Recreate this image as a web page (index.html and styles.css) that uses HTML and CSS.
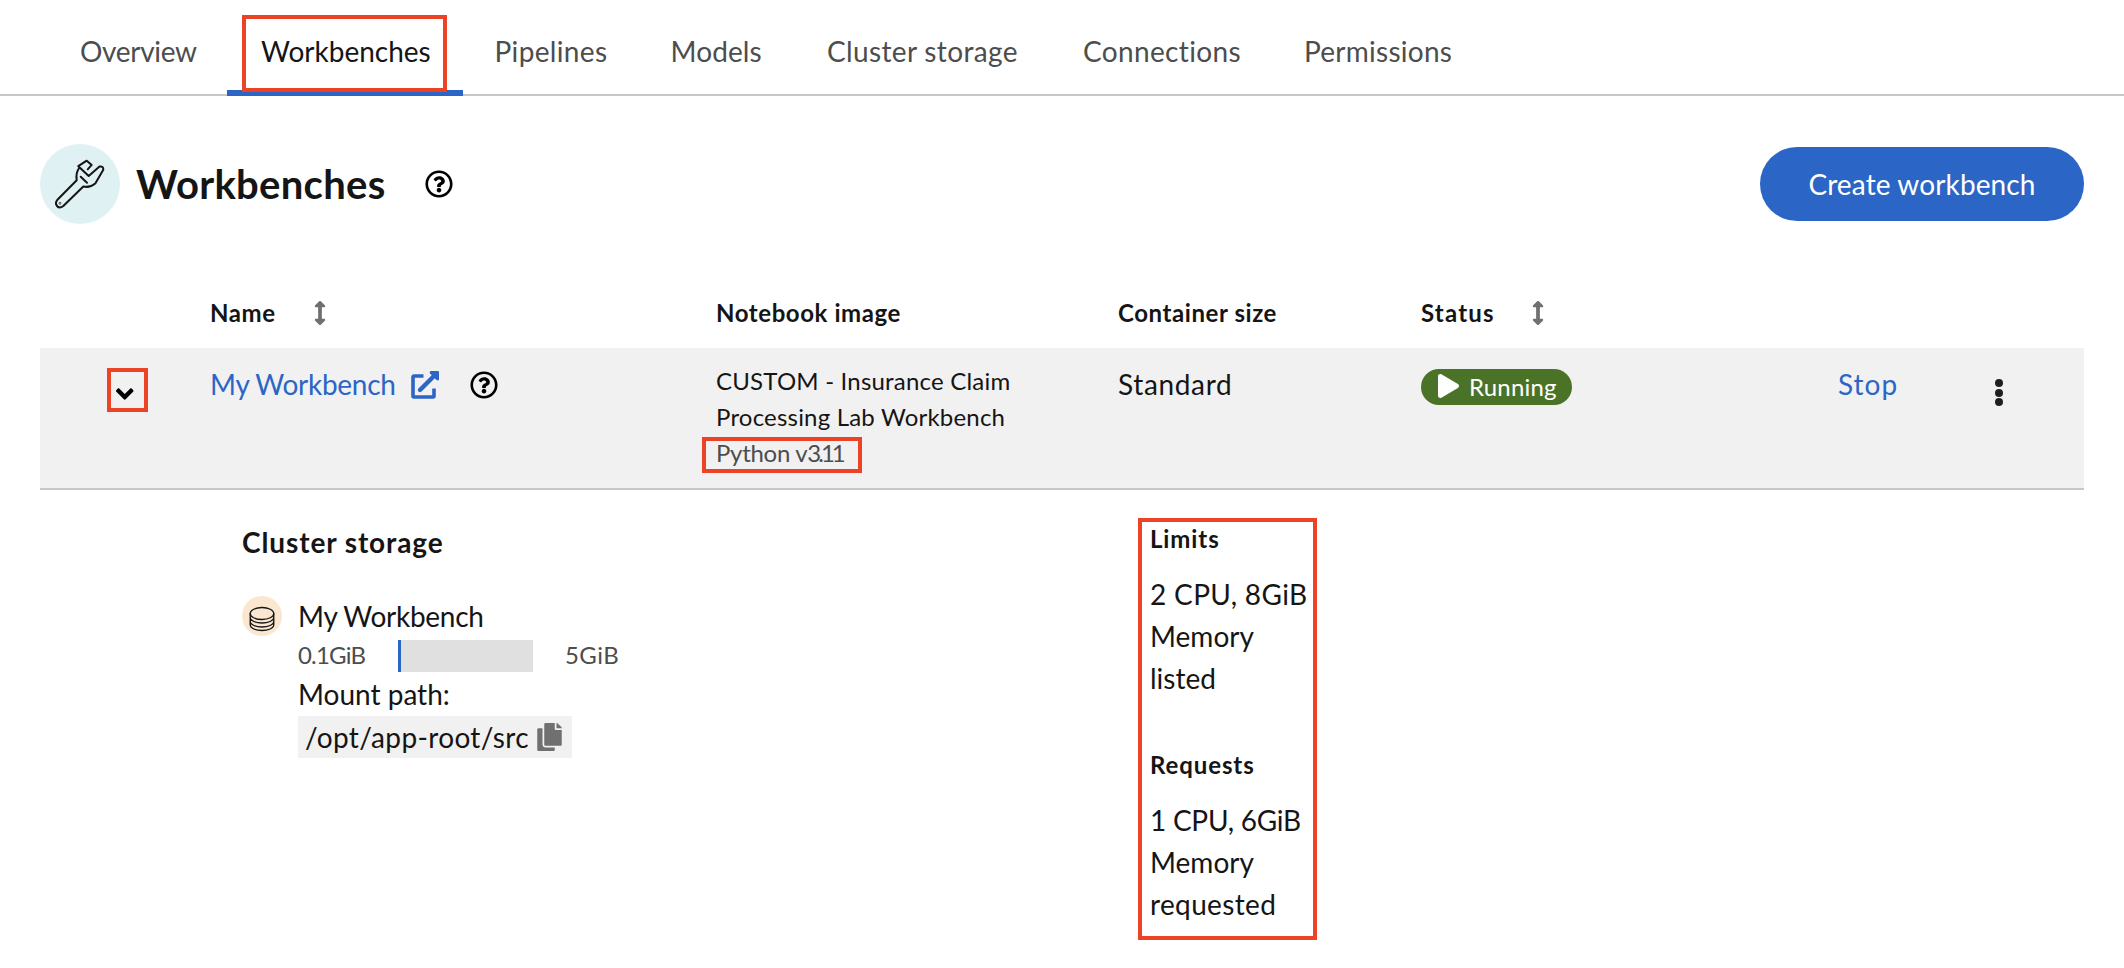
FILE: index.html
```html
<!DOCTYPE html>
<html lang="en">
<head>
<meta charset="utf-8">
<title>Workbenches</title>
<link rel="stylesheet" href="styles.css">
</head>
<body>
<svg class="sprite" aria-hidden="true">
  <symbol id="help" viewBox="0 0 512 512"><path d="M256 8C119.043 8 8 119.083 8 256c0 136.997 111.043 248 248 248s248-111.003 248-248C504 119.083 392.957 8 256 8zm0 448c-110.532 0-200-89.431-200-200 0-110.495 89.472-200 200-200 110.491 0 200 89.471 200 200 0 110.53-89.431 200-200 200zm107.244-255.2c0 67.052-72.421 68.084-72.421 92.863V300c0 6.627-5.373 12-12 12h-45.647c-6.627 0-12-5.373-12-12v-8.659c0-35.745 27.1-50.034 47.579-61.516 17.561-9.845 28.324-16.541 28.324-29.579 0-17.246-21.999-28.693-39.784-28.693-23.189 0-33.894 10.977-48.942 29.969-4.057 5.12-11.46 6.071-16.666 2.124l-27.824-21.098c-5.107-3.872-6.251-11.066-2.644-16.363C184.846 131.491 214.94 112 261.794 112c49.071 0 101.45 38.304 101.45 88.8zM298 368c0 23.159-18.841 42-42 42s-42-18.841-42-42 18.841-42 42-42 42 18.841 42 42z"/></symbol>
  <symbol id="sort" viewBox="0 0 256 512"><path d="M214.059 377.941H168V134.059h46.059c21.382 0 32.09-25.851 16.971-40.971L144.971 7.029c-9.373-9.373-24.568-9.373-33.941 0L24.971 93.088c-15.119 15.119-4.411 40.971 16.971 40.971H88v243.882H41.941c-21.382 0-32.09 25.851-16.971 40.971l86.059 86.059c9.373 9.373 24.568 9.373 33.941 0l86.059-86.059c15.12-15.119 4.412-40.971-16.97-40.971z"/></symbol>
</svg>
<nav class="tabs">
  <a class="tab tab-overview">Overview</a>
  <a class="tab tab-workbenches current">Workbenches<span class="mark mark-tab"></span></a>
  <a class="tab tab-pipelines">Pipelines</a>
  <a class="tab tab-models">Models</a>
  <a class="tab tab-storage">Cluster storage</a>
  <a class="tab tab-connections">Connections</a>
  <a class="tab tab-permissions">Permissions</a>
</nav>
<main class="page">
  <header class="head">
    <span class="badge">
      <svg width="60" height="60" viewBox="0 0 60 60" fill="none" stroke="#151515" stroke-width="2" stroke-linejoin="round" stroke-linecap="round"><path d="M37.700 15.300L41.700 10.900L36.700 6.700L28.300 12.200L38.700 22L49.500 12.500Q53.500 12 53.300 15.800L45.300 29.500Q40 34 33.300 32.500L13.300 52Q9.500 55 7 52Q4.800 49 7.200 46L26.700 26.200Q25.500 18.500 29.500 13.500M30.700 22.700L37 28.700"/><circle cx="10" cy="49.300" r="0.300"/></svg>
    </span>
    <h1 class="title">Workbenches</h1>
    <svg class="help head-help"><use href="#help"/></svg>
    <button class="create"><span>Create workbench</span></button>
  </header>
  <section class="table">
    <div class="grid thead">
      <span></span>
      <span class="th th-name"><span>Name</span><svg class="sort"><use href="#sort"/></svg></span>
      <span class="th th-image">Notebook image</span>
      <span class="th th-size">Container size</span>
      <span class="th th-status"><span>Status</span><svg class="sort"><use href="#sort"/></svg></span>
      <span></span>
      <span></span>
    </div>
    <div class="grid row">
      <button class="toggle"><svg width="17.500" height="28" viewBox="0 0 320 512"><path d="M143 352.300L7 216.300c-9.400-9.400-9.400-24.600 0-33.900l22.600-22.600c9.400-9.400 24.600-9.400 33.900 0l96.400 96.400 96.400-96.400c9.400-9.400 24.600-9.400 33.900 0l22.600 22.600c9.400 9.400 9.400 24.600 0 33.900l-136 136c-9.200 9.400-24.400 9.400-33.800 0z"/></svg></button>
      <div class="name">
        <a class="link name-link">My Workbench</a>
        <svg class="ext" width="28" height="28" viewBox="0 0 28 28"><path d="M12.500 5H3Q2 5 2 6V25Q2 26 3 26H22Q23 26 23 25V17.500" fill="none" stroke="currentColor" stroke-width="3.600"/><path d="M9 19L23 5" stroke="currentColor" stroke-width="4.400" stroke-linecap="round"/><path d="M19.500 0H27Q28 0 28 1V8.500Q27 10 25.500 9L19 2.500Q18 1 19.500 0Z" fill="currentColor"/></svg>
        <svg class="help"><use href="#help"/></svg>
      </div>
      <div class="image">
        <div class="img-1">CUSTOM - Insurance Claim</div>
        <div class="img-2">Processing Lab Workbench</div>
        <div class="version">Python v<span class="digits">3.11</span><span class="mark mark-version"></span></div>
      </div>
      <div class="size">Standard</div>
      <div><span class="status"><svg width="21" height="24" viewBox="0 0 448 512"><path d="M424.400 214.700L72.400 6.600C43.800-10.300 0 6.100 0 47.900V464c0 37.500 40.700 60.100 72.400 41.300l352-208c31.400-18.500 31.500-64.100 0-82.600z"/></svg><span>Running</span></span></div>
      <a class="link stop">Stop</a>
      <div class="kebab"><i></i><i></i><i></i></div>
    </div>
    <div class="details">
      <div class="storage">
        <h2 class="storage-title">Cluster storage</h2>
        <div class="volume">
          <span class="disk">
            <svg width="40" height="40" viewBox="0 0 40 40" fill="none" stroke="#151515" stroke-width="1.300"><ellipse cx="20" cy="17.500" rx="11.800" ry="6"/><path d="M8.200 17.500V28.500C8.200 36.500 31.800 36.500 31.800 28.500V17.500M8.200 21C8.200 29 31.800 29 31.800 21M8.200 25C8.200 33 31.800 33 31.800 25"/></svg>
          </span>
          <div class="volume-body">
            <div class="vol-name">My Workbench</div>
            <div class="usage"><span class="used">0.1GiB</span><span class="meter"><span class="meter-fill"></span></span><span class="total">5GiB</span></div>
            <div class="mount">Mount path:</div>
            <div class="path"><span>/opt/app-root/src</span><svg width="25" height="28" viewBox="0 0 448 512"><path d="M320 448v40c0 13.255-10.745 24-24 24H24c-13.255 0-24-10.745-24-24V120c0-13.255 10.745-24 24-24h72v296c0 30.879 25.121 56 56 56h168zm0-344V0H152c-13.255 0-24 10.745-24 24v368c0 13.255 10.745 24 24 24h272c13.255 0 24-10.745 24-24V128H344c-13.200 0-24-10.800-24-24zm120.971-31.029L375.029 7.029A24 24 0 0 0 358.059 0H352v96h96v-6.059a24 24 0 0 0-7.029-16.970z"/></svg></div>
          </div>
        </div>
      </div>
      <div class="resources">
        <h3 class="r-limits">Limits</h3>
        <p><span class="r-cpu">2 CPU, 8GiB</span><br><span class="r-mem">Memory</span><br><span class="r-listed">listed</span></p>
        <h3 class="r-requests">Requests</h3>
        <p><span class="r-cpu2">1 CPU, 6GiB</span><br><span class="r-mem">Memory</span><br><span class="r-requested">requested</span></p>
        <span class="mark mark-resources"></span>
      </div>
    </div>
  </section>
</main>
</body>
</html>
```
FILE: styles.css
```css
* { box-sizing: border-box; }
body {
  margin: 0;
  min-height: 968px;
  background: #fff;
  color: #151515;
  font: 28px/42px Lato, "Noto Sans", sans-serif;
  font-variant-ligatures: none;
  white-space: nowrap;
}
h1, h2, h3, p { margin: 0; }
button { border: 0; background: none; padding: 0; font: inherit; color: inherit; }
svg { display: block; flex: none; }
.sprite { position: absolute; width: 0; height: 0; }

/* Annotation outlines drawn over the content */
.mark { position: absolute; border: 4px solid #ec4226; }
.mark-tab { left: 15px; top: 15px; width: 205px; height: 77px; }
.mark-version { left: -14px; top: 2px; width: 160px; height: 36px; }
.mark-resources { left: -12px; top: -3px; width: 179px; height: 422px; }

.tabs {
  display: grid;
  grid-template-columns: 181px 236px 176px 154px 256px 221px 212px;
  padding-left: 46px;
  height: 96px;
  box-shadow: inset 0 -2px #c7c7c7;
}
.tab { position: relative; padding: 30px 0 0 34px; color: #4d4d4d; letter-spacing: 0.35px; }
.tab.current { color: #151515; border-bottom: 6px solid #2b66c6; letter-spacing: 0; }
.tab.tab-overview { letter-spacing: -0.3px; }
.tab-pipelines, .tab-models { padding-left: 31.5px; }
.tab.tab-models { letter-spacing: 0.1px; }
.tab.tab-permissions { letter-spacing: 0.25px; }

.page { padding: 48px 40px 0; }
.head { display: flex; align-items: center; height: 80px; }
.badge { display: flex; align-items: center; justify-content: center; width: 80px; height: 80px; border-radius: 50%; background: #e0f1f3; }
.title { width: 289px; margin-left: 16px; font-size: 40px; line-height: 52px; font-weight: 700; letter-spacing: 0.3px; }
.help { width: 28px; height: 28px; }
.create { margin-left: auto; width: 324px; height: 74px; border-radius: 37px; background: #2b66c6; color: #fff; letter-spacing: 0.12px; }

.grid { display: grid; grid-template-columns: 170px 506px 402px 303px 417px 149px 97px; }
.thead { padding: 71px 0 17px; font-size: 24px; line-height: 36px; font-weight: 700; letter-spacing: 0.58px; }
.th { display: flex; align-items: center; }
.th-name span { width: 104px; }
.th-status span { width: 111px; letter-spacing: 1.2px; }
.sort { width: 12px; height: 24px; fill: #707070; }
.row { height: 142px; padding-top: 15px; background: #f1f1f1; border-bottom: 2px solid #c7c7c7; }
.toggle { width: 41px; height: 44px; margin: 5px 0 0 67px; padding: 7px 0 0 5px; border: 4px solid #ec4226; }
.name { display: flex; height: 42px; }
.link { color: #2b66c6; }
.name-link { width: 201px; letter-spacing: -0.28px; }
.ext { margin-top: 8px; color: #2b66c6; }
.name .help { margin: 8px 0 0 31px; }
.image { font-size: 24px; line-height: 36px; letter-spacing: 0.2px; }
.version { position: relative; color: #4d4d4d; letter-spacing: -0.3px; }
.digits { letter-spacing: -3px; }
.size { letter-spacing: 0.65px; }
.status { display: flex; align-items: center; width: 151px; height: 36px; margin-top: 6px; padding-left: 17px; gap: 10px; border-radius: 18px; background: #4b7328; color: #fff; font-size: 24px; letter-spacing: 0.2px; }
.status svg { fill: #fff; margin-top: -2px; }
.stop { letter-spacing: 1px; }
.kebab { display: flex; flex-direction: column; gap: 1.5px; margin-top: 16px; padding-left: 8px; }
.kebab i { width: 8px; height: 8px; border-radius: 50%; background: #1f1f1f; }

.details { display: grid; grid-template-columns: 908px auto; padding: 31px 0 0 202px; }
.storage-title { font-size: 28px; font-weight: 700; letter-spacing: 0.9px; }
.volume { display: flex; gap: 16px; margin-top: 32px; }
.disk { width: 40px; height: 40px; margin-top: 1px; border-radius: 50%; background: #fbe7cf; }
.vol-name { letter-spacing: -0.28px; }
.usage { display: flex; align-items: center; height: 36px; font-size: 24px; line-height: 36px; color: #4d4d4d; }
.used { width: 100px; letter-spacing: -0.8px; }
.total { letter-spacing: 0.4px; }
.meter { width: 135px; height: 32px; margin: 2px 32px 0 0; background: #e0e0e0; }
.meter-fill { display: block; width: 3px; height: 32px; background: #2b66c6; }
.path { display: flex; align-items: center; width: 274px; height: 42px; margin-top: 1px; padding-left: 7px; background: #f1f1f1; }
.path span { width: 232px; letter-spacing: 0.35px; }
.path svg { fill: #707070; }
.resources { position: relative; }
.resources h3 { font-size: 24px; line-height: 36px; font-weight: 700; letter-spacing: 0.9px; margin-bottom: 16px; }
.resources p + h3 { margin-top: 48px; }
.r-cpu, .r-requested { letter-spacing: 0.35px; }
.r-cpu2 { letter-spacing: -0.25px; }
```
